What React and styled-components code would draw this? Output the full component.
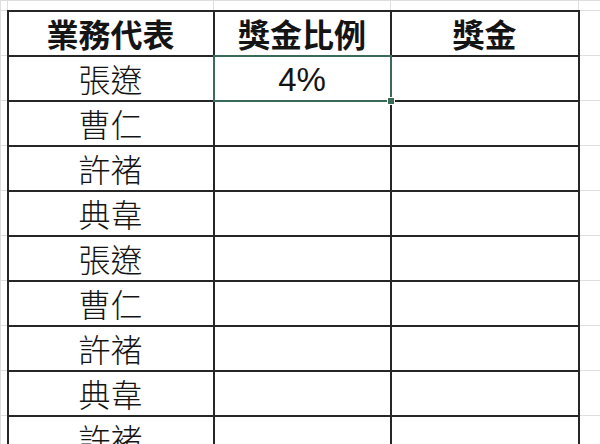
import React from 'react';
import styled, { createGlobalStyle } from 'styled-components';

const GlobalStyle = createGlobalStyle`
  html, body {
    margin: 0;
    padding: 0;
    background: #ffffff;
    overflow: hidden;
  }
`;

const names = ['張遼', '曹仁', '許褚', '典韋', '張遼', '曹仁', '許褚', '典韋', '許褚'];

const Sheet = styled.table`
  border-collapse: collapse;
  table-layout: fixed;
  width: 660px;
  font-family: "Noto Sans CJK TC", "Noto Sans CJK SC", sans-serif;
  color: #141414;
`;

const Row = styled.tr`
  height: ${(p) => (p.$edge ? '10px' : '45px')};
`;

const Cell = styled.td`
  position: relative;
  padding: 0;
  text-align: center;
  vertical-align: middle;
  font-size: 32px;
  line-height: 1;
  font-weight: ${(p) => (p.$head ? 700 : 300)};
  border: ${(p) => (p.$boxed ? '2px solid #262626' : '1px solid #dedede')};
  white-space: nowrap;
  overflow: visible;
`;

const Value = styled.span`
  font-family: "Liberation Sans", Arial, sans-serif;
  font-size: 33px;
  font-weight: 400;
`;

const Selection = styled.div`
  position: absolute;
  inset: -2px;
  border: 2px solid #3a6a58;
  pointer-events: none;

  &::after {
    content: '';
    position: absolute;
    right: -5px;
    bottom: -5px;
    width: 6px;
    height: 6px;
    background: #3a6a58;
    border: 1px solid #ffffff;
  }
`;

const SheetRow = ({ cells, head }) => (
  <Row>
    <Cell />
    {cells.map((c, i) => (
      <Cell key={i} $boxed $head={head}>{c}</Cell>
    ))}
    <Cell />
  </Row>
);

const App = () => (
  <>
    <GlobalStyle />
    <Sheet>
      <colgroup>
        <col style={{ width: 7 }} />
        <col style={{ width: 206 }} />
        <col style={{ width: 177 }} />
        <col style={{ width: 188 }} />
        <col style={{ width: 82 }} />
      </colgroup>
      <tbody>
        <Row $edge>
          <Cell /><Cell /><Cell /><Cell /><Cell />
        </Row>
        <SheetRow head cells={['業務代表', '獎金比例', '獎金']} />
        <Row>
          <Cell />
          <Cell $boxed>張遼</Cell>
          <Cell $boxed>
            <Value>4%</Value>
            <Selection />
          </Cell>
          <Cell $boxed />
          <Cell />
        </Row>
        {names.slice(1).map((n, i) => (
          <SheetRow key={i} cells={[n, '', '']} />
        ))}
      </tbody>
    </Sheet>
  </>
);

export default App;
